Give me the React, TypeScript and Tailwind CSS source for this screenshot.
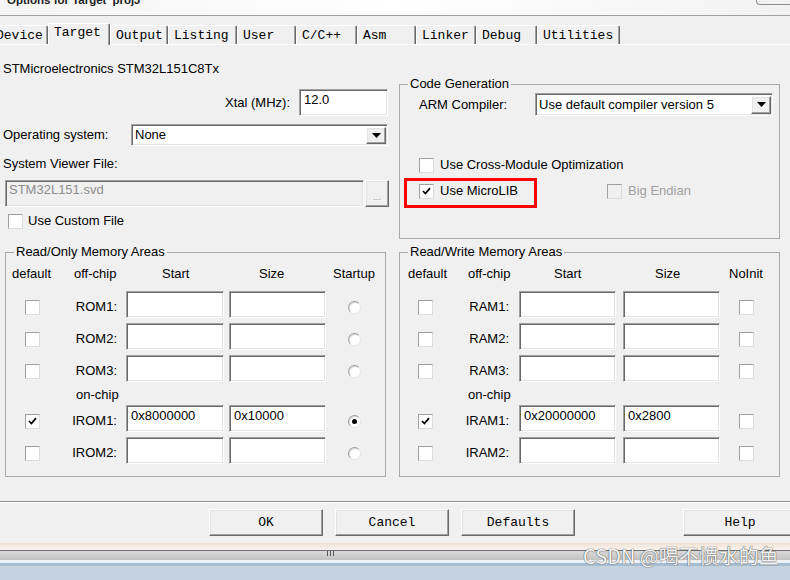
const sunk =
  "border border-t-[#a0a0a0] border-l-[#a0a0a0] border-b-white border-r-white shadow-[inset_1px_1px_0_#696969,inset_-1px_-1px_0_#e3e3e3]";
const raised =
  "border border-t-white border-l-white border-b-[#696969] border-r-[#696969] shadow-[inset_-1px_-1px_0_#a0a0a0,inset_1px_1px_0_#e3e3e3]";

function Check({ checked, disabled }: { checked?: boolean; disabled?: boolean }) {
  return (
    <span
      className={`flex h-[15px] w-[15px] shrink-0 items-center justify-center border border-t-[#a0a0a0] border-l-[#a0a0a0] border-r-[#dcdcdc] border-b-[#dcdcdc] ${
        disabled ? "bg-[#f0f0f0]" : "bg-white"
      }`}
    >
      {checked && (
        <svg width="9" height="8" viewBox="0 0 9 8">
          <path d="M1 4 L3.4 6.5 L8 1.2" fill="none" stroke="#000" strokeWidth="1.8" />
        </svg>
      )}
    </span>
  );
}

function Radio({ on }: { on?: boolean }) {
  return (
    <span className="flex h-[13px] w-[13px] items-center justify-center rounded-full border border-[#a0a0a0] border-b-[#e3e3e3] border-r-[#e3e3e3] bg-white shadow-[inset_1px_1px_0_#dcdcdc]">
      {on && <span className="h-[5px] w-[5px] rounded-full bg-black" />}
    </span>
  );
}

function Combo({ value, w, h }: { value: string; w: string; h: string }) {
  return (
    <div className={`flex ${w} ${h} items-center bg-white ${sunk}`}>
      <span className="flex-1 pl-[3px]">{value}</span>
      <span
        className={`mr-px flex h-[calc(100%-3px)] w-[20px] items-center justify-center bg-[#f0f0f0] ${raised}`}
      >
        <svg width="9" height="5" viewBox="0 0 9 5">
          <path d="M0 0h9L4.5 5z" fill="#000" />
        </svg>
      </span>
    </div>
  );
}

function Field({ w, value }: { w: string; value?: string }) {
  return (
    <div className={`h-[27px] shrink-0 ${w} bg-white pl-[4px] pt-[2px] ${sunk}`}>{value}</div>
  );
}

type Cfg = {
  a: string;
  hA: string;
  cA: string;
  b: string;
  hB: string;
  lB: string;
  oB: string;
  c: string;
  gap: string;
  d: string;
  hC: string;
  hD: string;
  hE: string;
  cE: string;
};

type Row = { label: string; on?: boolean; start?: string; size?: string };

function MemGroup({
  title,
  last,
  rows,
  cfg,
  radio,
  className,
}: {
  title: string;
  last: string;
  rows: Row[];
  cfg: Cfg;
  radio?: boolean;
  className: string;
}) {
  const line = (r: Row, i: number) => (
    <div key={r.label} className={`${i === 3 ? "mt-[2px]" : "mt-[5px]"} flex h-[27px] items-center`}>
      <div className={`${cfg.a} ${cfg.cA} shrink-0 pt-[5px]`}>
        <Check checked={r.on} />
      </div>
      <div className={`${cfg.b} ${cfg.lB} shrink-0 pt-[5px] text-right`}>{r.label}</div>
      <Field w={cfg.c} value={r.start} />
      <div className={`${cfg.gap} shrink-0`} />
      <Field w={cfg.d} value={r.size} />
      <div className={`${cfg.cE} flex-1 pt-[5px]`}>{radio ? <Radio on={r.on} /> : <Check />}</div>
    </div>
  );

  return (
    <fieldset className={`h-[233px] shrink-0 border border-[#a9a9a9] ${className}`}>
      <legend className="ml-[8px] px-[2px]">{title}</legend>
      <div className="mt-[6px] flex">
        <div className={`${cfg.a} ${cfg.hA} shrink-0`}>default</div>
        <div className={`${cfg.b} ${cfg.hB} shrink-0`}>off-chip</div>
        <div className={`${cfg.c} ${cfg.hC} shrink-0`}>Start</div>
        <div className={`${cfg.gap} shrink-0`} />
        <div className={`${cfg.d} ${cfg.hD} shrink-0`}>Size</div>
        <div className={`${cfg.hE} flex-1`}>{last}</div>
      </div>
      <div className="mt-[9px]" />
      {rows.slice(0, 3).map((r, i) => line(r, i))}
      <div className="mt-[5px] flex">
        <div className={`${cfg.a} shrink-0`} />
        <div className={cfg.oB}>on-chip</div>
      </div>
      {rows.slice(3).map((r, i) => line(r, i + 3))}
    </fieldset>
  );
}

const leftCfg: Cfg = {
  a: "w-[60px]",
  hA: "pl-[6px]",
  cA: "pl-[19px]",
  b: "w-[60px]",
  hB: "pl-[8px]",
  lB: "pr-[9px]",
  oB: "pl-[10px]",
  c: "w-[98px]",
  gap: "w-[5px]",
  d: "w-[97px]",
  hC: "pl-[36px]",
  hD: "pl-[30px]",
  hE: "pl-[7px]",
  cE: "pl-[22px]",
};

const rightCfg: Cfg = {
  a: "w-[60px]",
  hA: "pl-[8px]",
  cA: "pl-[18px]",
  b: "w-[59px]",
  hB: "pl-[8px]",
  lB: "pr-[10px]",
  oB: "pl-[8px]",
  c: "w-[97px]",
  gap: "w-[7px]",
  d: "w-[97px]",
  hC: "pl-[35px]",
  hD: "pl-[32px]",
  hE: "pl-[9px]",
  cE: "pl-[19px]",
};

const tabs = [
  { name: "Device", w: "w-[58px]" },
  { name: "Target", w: "w-[62px]", on: true },
  { name: "Output", w: "w-[58px]" },
  { name: "Listing", w: "w-[69px]" },
  { name: "User", w: "w-[59px]" },
  { name: "C/C++", w: "w-[61px]" },
  { name: "Asm", w: "w-[59px]" },
  { name: "Linker", w: "w-[60px]" },
  { name: "Debug", w: "w-[61px]" },
  { name: "Utilities", w: "w-[83px]" },
];

export default function App() {
  return (
    <div className="relative h-[580px] w-[790px] overflow-hidden bg-[#f0f0f0] font-['Liberation_Sans',Arial,sans-serif] text-[13px] leading-[16px] text-black">
      {/* title bar, mostly scrolled out of view */}
      <div className="flex h-[16px] items-start overflow-hidden border-b border-[#a0a0a0] bg-linear-to-r from-[#f4f4f4] via-white to-[#f2f2f2]">
        <span className="-mt-[7px] pl-[7px] text-[11.5px] font-bold leading-[14px] text-[#222]">
          Options for Target 'projJ'
        </span>
        <span className="ml-auto h-[5px] w-[34px] rounded-bl-[4px] border-b border-l border-[#8a8a8a]" />
      </div>

      {/* tabs */}
      <div className="flex h-[29px] items-end border-b border-white font-['Liberation_Mono',monospace]">
        <div className="w-0 shrink-0 -ml-[10px]" />
        {tabs.map((t) =>
          t.on ? (
            <div
              key={t.name}
              className={`relative -mb-px h-[22px] shrink-0 ${t.w} rounded-t-[2px] border-l border-t border-r border-l-white border-t-white border-r-[#696969] bg-[#f0f0f0] pl-[5px] pt-[1px] shadow-[inset_-1px_0_0_#a0a0a0]`}
            >
              {t.name}
            </div>
          ) : (
            <div
              key={t.name}
              className={`h-[19px] shrink-0 ${t.w} rounded-t-[2px] border-l border-t border-r border-l-white border-t-white border-r-[#696969] pl-[5px] pt-[2px] shadow-[inset_-1px_0_0_#a0a0a0]`}
            >
              {t.name}
            </div>
          ),
        )}
      </div>

      {/* top section */}
      <div className="flex h-[199px]">
        <div className="flex w-[390px] shrink-0 flex-col">
          <div className="mt-[16px] pl-[3px]">STMicroelectronics STM32L151C8Tx</div>
          <div className="mt-[12px] flex justify-end pr-[2px]">
            <span className="mr-[9px] mt-[6px]">Xtal (MHz):</span>
            <div className={`h-[27px] w-[89px] bg-white pl-[4px] pt-[2px] ${sunk}`}>12.0</div>
          </div>
          <div className="mt-[8px] flex items-center">
            <span className="w-[131px] shrink-0 pl-[3px]">Operating system:</span>
            <Combo value="None" w="w-[257px]" h="h-[22px]" />
          </div>
          <div className="mt-[10px] pl-[3px]">System Viewer File:</div>
          <div className="mt-[8px] flex pl-[5px]">
            <div className={`h-[27px] w-[359px] bg-[#f0f0f0] pl-[3px] pt-[1px] text-[#8d8d8d] ${sunk}`}>
              STM32L151.svd
            </div>
            <div
              className={`ml-px flex h-[27px] w-[24px] items-end justify-center bg-[#f0f0f0] pb-[4px] text-[9px] leading-[9px] text-[#8d8d8d] ${raised}`}
            >
              ...
            </div>
          </div>
          <div className="mt-[6px] flex items-center pl-[8px]">
            <Check />
            <span className="ml-[5px]">Use Custom File</span>
          </div>
        </div>

        <div className="ml-[9px] w-[381px] shrink-0">
          <fieldset className="mt-[31px] h-[163px] border border-[#a9a9a9]">
            <legend className="ml-[8px] px-[2px]">Code Generation</legend>
            <div className="mt-px flex items-center pl-[19px]">
              <span className="w-[116px] shrink-0">ARM Compiler:</span>
              <Combo value="Use default compiler version 5" w="w-[238px]" h="h-[23px]" />
            </div>
            <div className="mt-[41px] flex items-center pl-[19px]">
              <Check />
              <span className="ml-[6px]">Use Cross-Module Optimization</span>
            </div>
            <div className="mt-[5px] flex items-start">
              <div className="ml-[4px] h-[30px] w-[133px] shrink-0 border-[3px] border-[#ff0000] pl-[12px] pt-[2px]">
                <div className="flex items-center">
                  <Check checked />
                  <span className="ml-[6px]">Use MicroLIB</span>
                </div>
              </div>
              <div className="ml-[70px] mt-[5px] flex items-center">
                <Check disabled />
                <span className="ml-[6px] text-[#a0a0a0]">Big Endian</span>
              </div>
            </div>
          </fieldset>
        </div>
      </div>

      {/* memory areas */}
      <div className="flex">
        <MemGroup
          title="Read/Only Memory Areas"
          last="Startup"
          radio
          cfg={leftCfg}
          className="ml-[5px] w-[381px]"
          rows={[
            { label: "ROM1:" },
            { label: "ROM2:" },
            { label: "ROM3:" },
            { label: "IROM1:", on: true, start: "0x8000000", size: "0x10000" },
            { label: "IROM2:" },
          ]}
        />
        <MemGroup
          title="Read/Write Memory Areas"
          last="NoInit"
          cfg={rightCfg}
          className="ml-[13px] w-[381px]"
          rows={[
            { label: "RAM1:" },
            { label: "RAM2:" },
            { label: "RAM3:" },
            { label: "IRAM1:", on: true, start: "0x20000000", size: "0x2800" },
            { label: "IRAM2:" },
          ]}
        />
      </div>

      {/* separator + buttons */}
      <div className="mt-[24px] h-px bg-[#8c8c8c]" />
      <div className="h-px bg-white" />
      <div className="mt-[6px] flex gap-[12px] pl-[209px] font-['Liberation_Mono',monospace]">
        {["OK", "Cancel", "Defaults"].map((b) => (
          <div key={b} className={`flex h-[27px] w-[114px] shrink-0 items-center justify-center ${raised}`}>
            {b}
          </div>
        ))}
        <div className={`ml-[96px] flex h-[27px] w-[114px] shrink-0 items-center justify-center ${raised}`}>
          Help
        </div>
      </div>

      {/* window chrome below the dialog */}
      <div className="mt-[7px] h-[7px] bg-linear-to-b from-[#eee2d6] to-[#faf4ee]" />
      <div className="h-px bg-[#6e6e6e]" />
      <div className="flex h-[9px] gap-[2px] bg-linear-to-b from-[#dadada] to-[#c2c2c2] pl-[327px]">
        <span className="h-[5px] w-px bg-[#555]" />
        <span className="h-[5px] w-px bg-[#555]" />
        <span className="h-[5px] w-px bg-[#555]" />
      </div>
      <div className="h-[3px] bg-[#eef2f6]" />
      <div className="h-[3px] bg-[#a7bdd1]" />
      <div className="h-[14px] bg-[#c5d3e1]" />

      <div className="absolute left-[583px] top-[544px] font-['Noto_Sans_CJK_SC',sans-serif] text-[20px] leading-[24px] text-white/95 [text-shadow:0_0_1px_#555,0_0_1px_#555]">
        CSDN @喝不惯水的鱼
      </div>
    </div>
  );
}
